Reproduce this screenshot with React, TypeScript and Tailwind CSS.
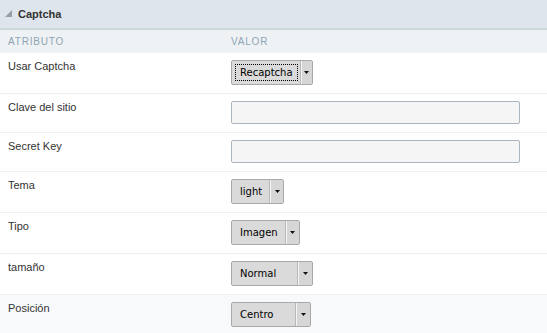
import React from 'react';

type Row = {
  label: string;
  kind: 'select' | 'input';
  value?: string;
  width?: number;
  focus?: boolean;
};

const rows: Row[] = [
  { label: 'Usar Captcha', kind: 'select', value: 'Recaptcha', width: 82, focus: true },
  { label: 'Clave del sitio', kind: 'input' },
  { label: 'Secret Key', kind: 'input' },
  { label: 'Tema', kind: 'select', value: 'light', width: 53 },
  { label: 'Tipo', kind: 'select', value: 'Imagen', width: 69 },
  { label: 'tamaño', kind: 'select', value: 'Normal', width: 82 },
  { label: 'Posición', kind: 'select', value: 'Centro', width: 80 },
];

function FakeSelect({ value, width, focus }: { value: string; width: number; focus?: boolean }) {
  return (
    <div
      className="flex h-[25px] border border-[#a9a9a9] bg-[#dadada] rounded-[2px]"
      style={{ width }}
    >
      <div className="flex-1 flex items-center pl-[3px] pr-[3px]">
        <span
          className={
            'flex items-center h-[17px] px-[4px] text-[10px] text-black font-["DejaVu_Sans",sans-serif] ' +
            (focus ? 'border border-dotted border-black' : 'border border-transparent')
          }
        >
          {value}
        </span>
      </div>
      <div className="w-[14px] flex items-center justify-center border-l border-l-[#f4f4f4] shadow-[-1px_0_0_#b8b8b8] bg-[#d6d6d6]">
        <svg width="5" height="3" viewBox="0 0 5 3">
          <path d="M0 0h5L2.5 3z" fill="#111" />
        </svg>
      </div>
    </div>
  );
}

export default function App() {
  return (
    <div className="w-[547px] h-[333px] overflow-hidden bg-white font-['Liberation_Sans',Arial,sans-serif]">
      {/* cabecera */}
      <div className="h-[30px] bg-[#dfe5ec] border-b-2 border-[#cbd8dc] flex items-center pl-[5px]">
        <svg width="7" height="7" viewBox="0 0 7 7" className="mr-[6px] mb-[1px]">
          <path d="M7 0V7H0z" fill="#9a9ea3" />
        </svg>
        <span className="text-[11px] font-bold text-[#333]">Captcha</span>
      </div>

      {/* columnas */}
      <div className="h-[23px] bg-[#eef2f5] flex items-center text-[10px] tracking-[0.8px] text-[#8fa4b3]">
        <div className="w-[231px] pl-[8px]">ATRIBUTO</div>
        <div>VALOR</div>
      </div>

      {rows.map((r, i) => (
        <div
          key={r.label}
          className={
            'flex border-b border-[#eef0f2] pt-[7px] pb-[8px] ' +
            (i === rows.length - 1 ? 'bg-[#f7f9fb]' : 'bg-white')
          }
        >
          <div className="w-[231px] pl-[8px] -mt-[1px] text-[11px] leading-[14px] text-[#333]">
            {r.label}
          </div>
          <div>
            {r.kind === 'select' ? (
              <FakeSelect value={r.value!} width={r.width!} focus={r.focus} />
            ) : (
              <div className="w-[289px] h-[23px] border border-[#adb5c0] rounded-[2px] bg-[#f5f5f5]" />
            )}
          </div>
        </div>
      ))}
    </div>
  );
}
